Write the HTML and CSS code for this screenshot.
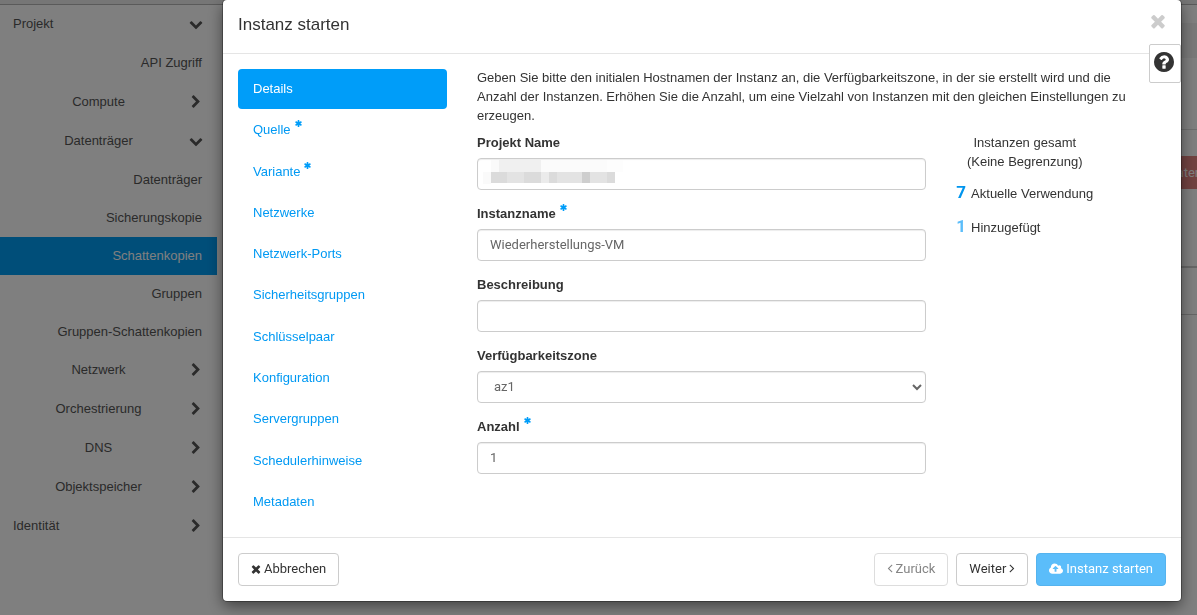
FILE: index.html
```html
<!DOCTYPE html>
<html lang="de">
<head>
<meta charset="utf-8">
<title>Instanz starten</title>
<link rel="stylesheet" href="styles.css">
</head>
<body>
<svg class="sprite" aria-hidden="true">
  <symbol id="down" viewBox="0 0 1792 1792"><path d="M1683 808l-742 741q-19 19-45 19t-45-19l-742-741q-19-19-19-45.500t19-45.500l166-165q19-19 45-19t45 19l531 531 531-531q19-19 45-19t45 19l166 165q19 19 19 45.500t-19 45.500z"/></symbol>
  <symbol id="right" viewBox="0 0 1792 1792"><path d="M1363 877l-742 742q-19 19-45 19t-45-19l-166-166q-19-19-19-45t19-45l531-531-531-531q-19-19-19-45t19-45l166-166q19-19 45-19t45 19l742 742q19 19 19 45t-19 45z"/></symbol>
  <symbol id="times" viewBox="192 192 1408 1408"><path d="M1490 1322q0 40-28 68l-136 136q-28 28-68 28t-68-28l-294-294-294 294q-28 28-68 28t-68-28l-136-136q-28-28-28-68t28-68l294-294-294-294q-28-28-28-68t28-68l136-136q28-28 68-28t68 28l294 294 294-294q28-28 68-28t68 28l136 136q28 28 28 68t-28 68l-294 294 294 294q28 28 28 68z"/></symbol>
  <symbol id="asterisk" viewBox="128 128 1536 1536"><path d="M1546 1050q46 26 59.500 77.500t-12.500 97.500l-64 110q-26 46-77.500 59.500t-97.500-12.500l-266-153v307q0 52-38 90t-90 38h-128q-52 0-90-38t-38-90v-307l-266 153q-46 26-97.500 12.500t-77.500-59.500l-64-110q-26-46-12.500-97.500t59.500-77.500l266-154-266-154q-46-26-59.500-77.500t12.500-97.500l64-110q26-46 77.500-59.500t97.500 12.500l266 153v-307q0-52 38-90t90-38h128q52 0 90 38t38 90v307l266-153q46-26 97.500-12.500t77.500 59.500l64 110q26 46 12.500 97.500t-59.500 77.500l-266 154z"/></symbol>
  <symbol id="angle-left" viewBox="544 128 704 1664"><path d="M1203 544q0 13-10 23l-393 393 393 393q10 10 10 23t-10 23l-50 50q-10 10-23 10t-23-10l-466-466q-10-10-10-23t10-23l466-466q10-10 23-10t23 10l50 50q10 10 10 23z"/></symbol>
  <symbol id="angle-right" viewBox="544 128 704 1664"><path d="M1171 960q0 13-10 23l-466 466q-10 10-23 10t-23-10l-50-50q-10-10-10-23t10-23l393-393-393-393q-10-10-10-23t10-23l50-50q10-10 23-10t23 10l466 466q10 10 10 23z"/></symbol>
  <symbol id="question" viewBox="128 128 1536 1536"><path d="M1024 1376v-192q0-14-9-23t-23-9h-192q-14 0-23 9t-9 23v192q0 14 9 23t23 9h192q14 0 23-9t9-23zm256-672q0-88-55.500-163t-138.500-116-170-41q-243 0-371 213-15 24 8 42l132 100q7 6 19 6 16 0 25-12 53-68 86-92 34-24 86-24 48 0 85.500 26t37.500 59q0 38-20 61t-68 45q-63 28-115.500 86.500t-52.500 125.500v36q0 14 9 23t23 9h192q14 0 23-9t9-23q0-19 21.500-49.500t54.500-49.500q32-18 49-28.500t46-35 44.500-48 28-60.500 12.500-81zm384 192q0 209-103 385.500t-279.500 279.500-385.500 103-385.500-103-279.500-279.500-103-385.500 103-385.500 279.500-279.500 385.500-103 385.500 103 279.500 279.500 103 385.500z"/></symbol>
  <symbol id="upload" viewBox="-64 128 1920 1536"><path d="M1216 864q0-14-9-23l-352-352q-9-9-23-9t-23 9l-351 351q-10 12-10 24 0 14 9 23t23 9h224v352q0 13 9.500 22.500t22.500 9.500h192q13 0 22.500-9.500t9.500-22.500v-352h224q13 0 22.500-9.500t9.500-22.500zm640 288q0 159-112.500 271.500t-271.500 112.500h-1088q-185 0-316.500-131.500t-131.500-316.500q0-130 70-240t188-165q-2-30-2-43 0-212 150-362t362-150q156 0 285.500 87t188.500 231q71-62 166-62 106 0 181 75t75 181q0 76-41 138 130 31 213.500 135.500t83.500 238.500z"/></symbol>
</svg>

<div class="page">
  <header class="topbar"></header>
  <div class="columns">
    <nav class="sidebar" aria-label="Hauptnavigation">
      <a class="group top" href="#"><span>Projekt</span><svg class="chevron"><use href="#down"/></svg></a>
      <a class="leaf tall" href="#">API Zugriff</a>
      <a class="group" href="#"><span>Compute</span><svg class="chevron"><use href="#right"/></svg></a>
      <a class="group" href="#"><span>Datenträger</span><svg class="chevron"><use href="#down"/></svg></a>
      <div class="subnav">
        <a class="leaf" href="#">Datenträger</a>
        <a class="leaf" href="#">Sicherungskopie</a>
        <a class="leaf current" href="#">Schattenkopien</a>
        <a class="leaf" href="#">Gruppen</a>
        <a class="leaf" href="#">Gruppen-Schattenkopien</a>
      </div>
      <a class="group" href="#"><span>Netzwerk</span><svg class="chevron"><use href="#right"/></svg></a>
      <a class="group" href="#"><span>Orchestrierung</span><svg class="chevron"><use href="#right"/></svg></a>
      <a class="group" href="#"><span>DNS</span><svg class="chevron"><use href="#right"/></svg></a>
      <a class="group" href="#"><span>Objektspeicher</span><svg class="chevron"><use href="#right"/></svg></a>
      <a class="group top" href="#"><span>Identität</span><svg class="chevron"><use href="#right"/></svg></a>
    </nav>
    <main class="main">
      <div class="breadcrumb"></div>
      <div class="heading"></div>
      <div class="toolbar"><button class="danger" type="button" disabled>Daten</button></div>
      <div class="table-head"></div>
      <div class="table-row"></div>
    </main>
  </div>
</div>

<div class="backdrop">
  <form class="modal" role="dialog" aria-labelledby="modal-title">
    <header class="modal-header">
      <h1 class="title" id="modal-title">Instanz starten</h1>
      <button class="close" type="button" aria-label="Schließen"><svg><use href="#times"/></svg></button>
    </header>
    <button class="help" type="button" aria-label="Hilfe"><svg><use href="#question"/></svg></button>
    <div class="modal-body">
      <nav class="steps" aria-label="Schritte">
        <a class="step active" href="#">Details</a>
        <a class="step" href="#">Quelle<svg class="required"><use href="#asterisk"/></svg></a>
        <a class="step" href="#">Variante<svg class="required"><use href="#asterisk"/></svg></a>
        <a class="step" href="#">Netzwerke</a>
        <a class="step" href="#">Netzwerk-Ports</a>
        <a class="step" href="#">Sicherheitsgruppen</a>
        <a class="step" href="#">Schlüsselpaar</a>
        <a class="step" href="#">Konfiguration</a>
        <a class="step" href="#">Servergruppen</a>
        <a class="step" href="#">Schedulerhinweise</a>
        <a class="step" href="#">Metadaten</a>
      </nav>
      <section class="content">
        <p class="intro">Geben Sie bitte den initialen Hostnamen der Instanz an, die Verfügbarkeitszone, in der sie erstellt wird und die Anzahl der Instanzen. Erhöhen Sie die Anzahl, um eine Vielzahl von Instanzen mit den gleichen Einstellungen zu erzeugen.</p>
        <div class="details">
          <div class="fields">
            <div class="field">
              <label for="project">Projekt Name</label>
              <div class="masked">
                <input class="control" id="project" type="text" readonly>
                <svg class="mosaic" viewBox="0 0 144 24" shape-rendering="crispEdges" aria-hidden="true">
                  <path fill="#fafafa" d="M8 0h8v12H8zM0 12h8v12H0z"/>
                  <path fill="#f0f0f0" d="M16 0h42v12H16z"/>
                  <path fill="#fbfbfb" d="M58 0h66v12H58z"/>
                  <path fill="#fdfdfd" d="M124 0h16v12h-16z"/>
                  <path fill="#dbdbdb" d="M8 12h16v11H8zM41 12h17v11H41zM66 12h8v11h-8zM124 12h8v11h-8z"/>
                  <path fill="#e3e3e3" d="M24 12h17v11H24zM74 12h25v11H74zM107 12h17v11h-17z"/>
                  <path fill="#ebebeb" d="M58 12h8v11h-8z"/>
                  <path fill="#cecece" d="M99 12h8v11h-8z"/>
                </svg>
              </div>
            </div>
            <div class="field">
              <label for="name">Instanzname<svg class="required"><use href="#asterisk"/></svg></label>
              <input class="control" id="name" type="text" value="Wiederherstellungs-VM">
            </div>
            <div class="field">
              <label for="description">Beschreibung</label>
              <input class="control" id="description" type="text">
            </div>
            <div class="field">
              <label for="zone">Verfügbarkeitszone</label>
              <select class="control" id="zone"><option>az1</option></select>
            </div>
            <div class="field">
              <label for="count">Anzahl<svg class="required"><use href="#asterisk"/></svg></label>
              <input class="control" id="count" type="number" value="1">
            </div>
          </div>
          <aside class="quota">
            <div class="quota-title">Instanzen gesamt<br>(Keine Begrenzung)</div>
            <div class="quota-row"><b class="used">7</b><span>Aktuelle Verwendung</span></div>
            <div class="quota-row"><b class="added">1</b><span>Hinzugefügt</span></div>
          </aside>
        </div>
      </section>
    </div>
    <footer class="modal-footer">
      <button class="button cancel" type="button"><svg class="cross"><use href="#times"/></svg>Abbrechen</button>
      <button class="button" type="button" disabled><svg class="angle"><use href="#angle-left"/></svg>Zurück</button>
      <button class="button" type="button">Weiter<svg class="angle"><use href="#angle-right"/></svg></button>
      <button class="button primary" type="submit" disabled><svg class="cloud"><use href="#upload"/></svg>Instanz starten</button>
    </footer>
  </form>
</div>
</body>
</html>
```

FILE: styles.css
```css
* { box-sizing: border-box; }

body {
  margin: 0;
  font: 13px/19px "Liberation Sans", Arial, sans-serif;
  color: #333;
  background: #fff;
}

a { text-decoration: none; }
button, input, select { font: 13px/19px Roboto, sans-serif; }
svg { fill: currentColor; flex: none; }
.sprite { position: absolute; width: 0; height: 0; }

/* Page behind the dialog */
.page { height: 100vh; overflow: hidden; }
.topbar { height: 5px; background: #ededed; border-bottom: 1px solid #b4b4b4; }
.columns { display: flex; }
.sidebar { width: 217px; flex: none; }
.sidebar a { display: flex; align-items: center; color: #555; }
.group { height: 39px; padding: 0 14px 2px 13px; gap: 5px; }
.group span { flex: 1; text-align: center; }
.group.top span { text-align: left; }
.chevron { width: 14px; height: 14px; }
.leaf { height: 38px; padding: 0 15px 2px; justify-content: flex-end; }
.leaf.tall { height: 39px; }
.sidebar .current { background: #009cf3; color: #fff; }

.main { flex: 1; min-width: 0; overflow: hidden; padding: 18px 0 0 15px; }
.breadcrumb { height: 35px; background: #f3f3f3; }
.heading { height: 72px; border-bottom: 1px solid #ddd; }
.toolbar { display: flex; justify-content: flex-end; padding: 26px 0 77px; margin-right: -18px; }
.danger {
  height: 33px;
  padding: 0 12px;
  border: 1px solid #d9534f;
  background: #d9534f;
  color: #fff;
  opacity: .7;
}
.table-head { border-bottom: 2px solid #ccc; }
.table-row { height: 47px; border-bottom: 1px solid #ccc; }

/* Dialog */
.backdrop {
  position: fixed;
  inset: 0;
  background: rgba(0, 0, 0, .5);
  padding: 0 16px 14px 223px;
}
.modal {
  position: relative;
  background: #fff;
  border-radius: 4px;
  box-shadow: 0 0 0 1px rgba(0, 0, 0, .3), 0 5px 15px rgba(0, 0, 0, .5);
}
.modal-header {
  display: flex;
  align-items: center;
  justify-content: space-between;
  padding: 13px 15px 16px;
  border-bottom: 1px solid #e5e5e5;
}
.title { margin: 0; font-size: 17px; line-height: 24px; font-weight: 400; }
.close { display: flex; padding: 0; border: 0; background: none; color: #ccc; margin-bottom: 8px; }
.close svg { width: 16px; height: 16px; }
.help {
  position: absolute;
  top: 44px;
  right: 0;
  width: 32px;
  height: 39px;
  padding: 0 2px 4px 0;
  display: grid;
  place-items: center;
  color: #333;
  background: #fff;
  border: 1px solid #ccc;
  border-radius: 2px;
}
.help svg { width: 20px; height: 20px; }

.modal-body { display: grid; grid-template-columns: 239px 1fr; min-height: 483px; }
.steps { display: flex; flex-direction: column; justify-content: space-between; padding: 15px; }
.step { display: flex; height: 39px; padding: 9px 15px; color: #0099f3; border-radius: 4px; }
.step.active { background: #009df9; color: #fff; height: 40px; padding: 10px 15px; }
.required { width: 7px; height: 7px; margin-left: 4px; color: #009df9; }

.content { padding: 14px 15px 15px; }
.intro { margin: 0 30px 8px 0; }
.details { display: grid; grid-template-columns: 2fr 1fr; margin: 0 -15px; }
.fields { display: flex; flex-direction: column; gap: 14px; padding: 0 15px; }
.field { display: flex; flex-direction: column; gap: 6px; }
.field label { display: flex; font-weight: 700; }
.control {
  display: block;
  width: 100%;
  height: 32px;
  padding: 4px 12px 6px;
  color: #666;
  background: #fff;
  border: 1px solid #ccc;
  border-radius: 4px;
  box-shadow: inset 0 1px 1px rgba(0, 0, 0, .075);
}
.masked { position: relative; }
.mosaic { position: absolute; left: 6px; top: 2px; width: 144px; height: 24px; }

.quota { justify-self: start; padding: 0 15px; }
.quota-title { text-align: center; margin-bottom: 13px; }
.quota-row { display: flex; align-items: center; gap: 5px; height: 19px; margin-bottom: 15px; }
.quota-row b { font: 700 17px/19px Roboto, sans-serif; padding-bottom: 2px; }
.used { color: #0095ee; }
.added { color: #5bbdfa; }

.modal-footer { display: flex; gap: 8px; padding: 15px; border-top: 1px solid #e5e5e5; }
.button {
  display: flex;
  align-items: center;
  gap: 3px;
  height: 33px;
  padding: 0 12px 2px;
  color: #333;
  background: #fff;
  border: 1px solid #ccc;
  border-radius: 4px;
}
.button:disabled { color: #858585; border-color: #ddd; }
.cancel { margin-right: auto; }
.button.primary { color: #fff; background: #5bbdfa; border-color: #55b3ee; }
.cross { width: 10px; height: 10px; }
.angle { width: 6px; height: 13px; }
.cloud { width: 14px; height: 12px; }
```
